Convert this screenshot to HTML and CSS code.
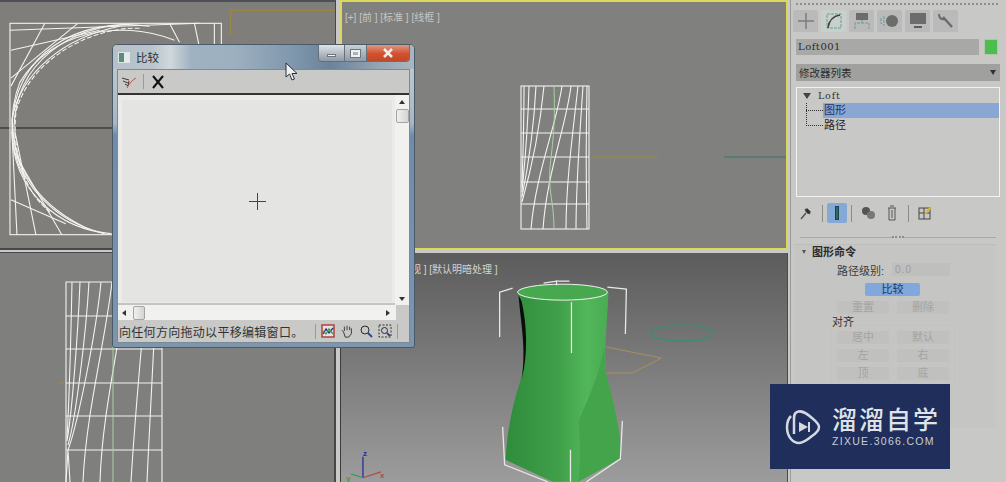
FILE: index.html
```html
<!DOCTYPE html>
<html lang="zh">
<head>
<meta charset="utf-8">
<title>Loft 比较</title>
<link rel="stylesheet" href="styles.css">
</head>
<body>
<main class="app">
  <section class="viewports">
    <div class="vp vp-top">
      <svg class="wire" viewBox="0 0 336 246">
        <line class="axis-black" x1="0" y1="126" x2="336" y2="126"/>
        <path class="orange" d="M231 33V8H336"/>
        <g class="w">
          <rect x="10" y="21" width="212" height="212"/>
          <line x1="215" y1="21" x2="215" y2="233"/>
          <line x1="10" y1="28" x2="200" y2="21"/>
          <line x1="45" y1="21" x2="11" y2="84"/>
          <line x1="78" y1="21" x2="11" y2="76"/>
          <line x1="11" y1="48" x2="100" y2="28"/>
          <line x1="195" y1="21" x2="200" y2="45"/>
          <line x1="170" y1="21" x2="180" y2="40"/>
          <line x1="11" y1="198" x2="66" y2="222"/>
          <line x1="15" y1="130" x2="36" y2="233"/>
          <line x1="14" y1="150" x2="62" y2="233"/>
          <line x1="12" y1="130" x2="17" y2="233"/>
          <path d="M150 24C80 14 12 50 12 128C12 190 60 228 112 232"/>
          <path d="M130 22C70 24 16 60 14 125C12 180 55 220 105 232"/>
          <path d="M120 24C65 35 20 70 12 118C14 170 40 205 90 228"/>
          <path d="M175 38C120 16 50 30 20 80C8 110 10 150 24 175"/>
          <path class="dash" d="M140 26C95 24 30 55 16 110C12 150 24 190 50 210"/>
        </g>
      </svg>
    </div>
    <div class="vp vp-front">
      <span class="vp-label">[+] [前 ] [标准 ] [线框 ]</span>
      <svg class="wire" viewBox="0 0 444 246">
        <line class="orange" x1="250" y1="155" x2="316" y2="155"/>
        <line class="teal" x1="382" y1="155" x2="444" y2="155"/>
        <g class="w">
          <rect x="179" y="84" width="68" height="143"/>
          <path d="M179 107H247M179 131H247M179 155H247M179 180H247M179 202H247"/>
          <path d="M245 84C244 130 244 180 245 227"/>
          <path d="M241 84C238 130 234 180 234 227"/>
          <path d="M236 84C231 130 224 180 224 227"/>
          <path d="M229 84C224 125 205 170 201 227"/>
          <path d="M220 84C214 125 194 170 189 227"/>
          <path d="M202 84C198 125 190 165 180 200"/>
          <path d="M194 84C192 125 186 165 180 195"/>
          <path d="M187 84C186 125 183 160 180 190"/>
          <path d="M182 84C182 125 181 150 180 185"/>
        </g>
        <path class="green-line" d="M212 84C213 120 212 130 208 165C206 190 212 200 212 227"/>
      </svg>
    </div>
    <div class="vp vp-left">
      <svg class="wire" viewBox="0 0 334 229">
        <g class="w">
          <path d="M66 229V29H162V229"/>
          <path d="M66 63H162M66 96H162M66 130H162M66 163H162M66 197H162"/>
          <path d="M157 29C154 90 150 160 147 229"/>
          <path d="M147 29C142 90 135 160 131 229"/>
          <path d="M127 29C120 90 102 160 100 229"/>
          <path d="M112 29C105 90 86 160 83 229"/>
          <path d="M101 29C96 80 78 170 68 197"/>
          <path d="M89 29C86 80 76 165 68 192"/>
          <path d="M80 29C78 80 72 160 67 188"/>
          <path d="M72 29C71 80 69 150 67 185"/>
          <path d="M68 197L66 229M68 197L70 229"/>
        </g>
        <path class="green-line" d="M113 29V229"/>
        <line class="orange" x1="58" y1="130" x2="64" y2="130"/>
      </svg>
    </div>
    <div class="vp vp-persp">
      <span class="vp-label persp-label">[+] [透视 ] [默认明暗处理 ]</span>
      <svg class="wire" viewBox="0 0 447 229">
        <defs>
          <linearGradient id="vase" x1="0" y1="0" x2="1" y2="0">
            <stop offset="0" stop-color="#2f8c3b"/>
            <stop offset=".45" stop-color="#3f9f49"/>
            <stop offset=".7" stop-color="#52b65a"/>
            <stop offset="1" stop-color="#46a64e"/>
          </linearGradient>
        </defs>
        <path class="orange-thin" d="M266 94L321 105 292 120 266 120"/>
        <ellipse class="teal-thin" cx="342" cy="80" rx="32" ry="8"/>
        <path class="vase" d="M178 39C180 70 186 95 181 124C172 150 166 180 165 207L212 229H238L281 205C280 175 272 145 266 122C263 100 267 70 268 39Z"/>
        <path class="vase-dark" d="M264 94C258 125 246 150 238 168C240 190 240 210 238 229L281 205C280 175 272 145 266 122C264 112 264 103 264 94Z"/>
        <path class="black" d="M178 42C180 70 186 95 181 127C188 100 186 70 181 48Z"/>
        <ellipse class="vase-top" cx="222" cy="39" rx="45" ry="8"/>
        <g class="bracket">
          <path d="M159 84V39L172 35"/>
          <path d="M203 30L216 28H229M216 27V32"/>
          <path d="M267 34L286 36 285 81"/>
          <path d="M231 49V100"/>
          <path d="M162 174L164 212 207 229"/>
          <path d="M230 197V229M282 168L280 206 246 229"/>
        </g>
        <g class="gizmo">
          <path class="gz" d="M22 225V204"/>
          <path class="rz" d="M22 225L40 219"/>
          <path class="gr" d="M22 225L10 221"/>
        </g>
        <text class="gz-t gz-z" x="22" y="203">z</text>
        <text class="gz-t gz-x" x="39" y="225">x</text>
        <text class="gz-t gz-y" x="5" y="228">y</text>
      </svg>
    </div>
  </section>

  <aside class="panel">
    <div class="dots"></div>
    <nav class="tabs">
      <div class="tab"><svg viewBox="0 0 24 22"><path class="ic" d="M12 3V19M4 11H20"/></svg></div>
      <div class="tab tab-on"><svg viewBox="0 0 24 22"><rect class="ic-t" x="5" y="4" width="14" height="14"/><path class="ic-d" d="M6 18C7 10 11 6 18 5"/></svg></div>
      <div class="tab"><svg viewBox="0 0 24 22"><rect class="ic-f" x="6" y="3" width="12" height="7"/><path class="ic-t" d="M12 10V13M5 19V13H19V19"/></svg></div>
      <div class="tab"><svg viewBox="0 0 24 22"><circle class="ic-f" cx="14" cy="11" r="6"/><path class="ic-t" d="M6 6V16M3 8V14"/></svg></div>
      <div class="tab"><svg viewBox="0 0 24 22"><rect class="ic-f" x="4" y="3" width="16" height="11"/><path class="ic-d" d="M8 17H16"/></svg></div>
      <div class="tab"><svg viewBox="0 0 24 22"><path class="ic-w" d="M9 7L18 17"/><path class="ic-w2" d="M5 4C5 8 7 10 11 9"/></svg></div>
    </nav>
    <div class="name-row">
      <div class="name-field">Loft001</div>
      <div class="swatch"></div>
    </div>
    <div class="mod-list"><span>修改器列表</span><i class="tri"></i></div>
    <div class="stack">
      <div class="stack-root"><i class="tri root-tri"></i>Loft</div>
      <div class="stack-row stack-sel"><i class="tree-h"></i><span>图形</span></div>
      <div class="stack-row"><i class="tree-h"></i><span>路径</span></div>
      <i class="tree-v"></i>
    </div>
    <div class="stack-tools">
      <svg class="tool tool-pin" viewBox="0 0 16 16"><path class="pin" d="M3 14L8 8M7 4L12 9"/><path class="pin-b" d="M9 3L13 7 10 9 7 6Z"/></svg>
      <i class="vsep"></i>
      <div class="tool-on"><i></i></div>
      <i class="vsep"></i>
      <svg class="tool" viewBox="0 0 16 16"><circle class="dk" cx="6" cy="6" r="4"/><circle class="dk2" cx="11" cy="10" r="4"/></svg>
      <svg class="tool" viewBox="0 0 16 16"><path class="trash" d="M6 1H10M4 3H12M5 3V15H11V3M8 5V13"/></svg>
      <i class="vsep"></i>
      <svg class="tool" viewBox="0 0 16 16"><rect class="cfg" x="2" y="3" width="11" height="11"/><path class="cfg" d="M2 8H13M7 3V14"/><path class="cfg-y" d="M8 9L14 2"/></svg>
    </div>
    <div class="divider"><span></span></div>
    <section class="rollout">
      <h2 class="roll-title"><i class="tri tri-small"></i>图形命令</h2>
      <div class="level"><span>路径级别:</span><span class="spin">0.0</span></div>
      <button class="btn-on" type="button">比较</button>
      <div class="btn-row"><span class="btn-off">重置</span><span class="btn-off">删除</span></div>
      <div class="align-label">对齐</div>
      <div class="align-box">
        <div class="btn-row"><span class="btn-off">居中</span><span class="btn-off">默认</span></div>
        <div class="btn-row"><span class="btn-off">左</span><span class="btn-off">右</span></div>
        <div class="btn-row"><span class="btn-off">顶</span><span class="btn-off">底</span></div>
      </div>
    </section>
  </aside>

  <div class="dialog">
    <header class="titlebar">
      <div class="app-icon"></div>
      <span class="title-text">比较</span>
      <div class="win-btns">
        <div class="wb wb-min"><i></i></div>
        <div class="wb wb-max"><i></i></div>
        <div class="wb wb-close">
          <svg viewBox="0 0 12 10"><path d="M2 1L10 9M10 1L2 9"/></svg>
        </div>
      </div>
    </header>
    <div class="client">
      <div class="dlg-toolbar">
        <svg class="dt-icon" viewBox="0 0 18 16"><path class="pick-b" d="M3 4L10 6M4 7L9 9M6 10L9 12 10 7"/><path class="pick-r" d="M8 14C10 10 13 6 17 4"/></svg>
        <i class="dt-sep"></i>
        <svg class="dt-x" viewBox="0 0 14 14"><path d="M2 1L12 13M12 1L2 13"/></svg>
      </div>
      <div class="dlg-body">
        <div class="canvas-wrap">
          <div class="canvas"><span class="cross"></span></div>
        </div>
        <div class="vbar">
          <i class="arrow-up"></i>
          <div class="thumb"></div>
          <i class="arrow-down"></i>
        </div>
      </div>
      <div class="hbar">
        <i class="arrow-left"></i>
        <div class="thumb thumb-h"></div>
        <i class="arrow-right"></i>
      </div>
      <footer class="status">
        <span class="status-text">向任何方向拖动以平移编辑窗口。</span>
        <i class="dt-sep"></i>
        <svg class="st-icon" viewBox="0 0 14 14"><rect class="st-frame" x="1" y="1" width="12" height="12"/><path class="st-blue" d="M2 10L5 5 8 9 12 4"/><path class="st-green" d="M2 7L5 10 8 5 12 10"/></svg>
        <svg class="st-icon" viewBox="0 0 16 16"><path class="st-line" d="M4 9L2 7M5 8V3M8 7V2M11 7V3M13 8V5M13 8V11L10 15H6L4 9"/></svg>
        <svg class="st-icon" viewBox="0 0 14 14"><circle class="st-line" cx="6" cy="6" r="4"/><path class="st-bl" d="M9 9L13 13"/></svg>
        <svg class="st-icon" viewBox="0 0 14 14"><rect class="st-dash" x="1" y="1" width="12" height="12"/><circle class="st-line" cx="6.5" cy="6.5" r="3"/><path class="st-bl" d="M9 9L12 12"/></svg>
        <i class="dt-sep"></i>
      </footer>
    </div>
  </div>

  <svg class="cursor" viewBox="0 0 13 19"><path d="M1 1V15L4.500 12 7 18 9.500 17 7 11.500H12Z"/></svg>

  <div class="logo">
    <svg class="logo-icon" viewBox="0 0 36 40">
      <path class="logo-s" d="M6 9C3 12 2 15 2 20C2 30 8 36 14 36C18 36 21 34 27 29C33 25 34 22 34 20C34 18 33 16 27 11C20 5 16 3 12 5C9 6 9 9 9 13V27"/>
      <path class="logo-f" d="M14 15L23 20 14 25Z"/>
      <rect class="logo-f" x="23" y="15" width="2" height="10"/>
    </svg>
    <div class="logo-text">
      <div class="logo-cn">溜溜自学</div>
      <div class="logo-en">ZIXUE.3066.COM</div>
    </div>
  </div>
</main>
</body>
</html>
```

FILE: styles.css
```css
* { box-sizing: border-box; }
html, body { margin: 0; padding: 0; }
body {
  width: 1006px;
  height: 482px;
  overflow: hidden;
  background: #c8c8c6;
  font-family: "Liberation Sans", "Noto Sans CJK SC", sans-serif;
  font-size: 12px;
  color: #222;
}
i { display: block; }

.app { position: relative; display: flex; width: 1006px; height: 482px; overflow: hidden; }

/* viewports */
.viewports {
  width: 790px;
  height: 482px;
  display: grid;
  grid-template-columns: 336px 454px;
  grid-template-rows: 250px 232px;
  background: #c9c9c7;
}
.vp { position: relative; overflow: hidden; }
.wire { position: absolute; left: 0; top: 0; width: 100%; height: 100%; }
.vp-top { background: #7f7e7a; border-top: 2px solid #4d5054; border-bottom: 2px solid #45474a; border-right: 1px solid #45474a; }
.vp-front { margin: 0 2px 0 4px; background: #80807e; border: 2px solid #dcd85a; }
.vp-left { background: #7f7f7d; border-top: 1px solid #4a4a4a; margin-top: 2px; height: 230px; border-right: 2px solid #45474a; width: 336px; }
.vp-persp {
  margin: 3px 2px 0 4px;
  background: linear-gradient(#5c5c5c, #9c9c9c);
  border-left: 1px solid #3c3c3c;
  border-right: 1px solid #4a4a4a;
}
.vp-label { position: absolute; left: 3px; top: 7px; font-size: 10px; color: #c6c6c6; white-space: pre; }
.persp-label { left: 43px; top: 8px; color: #d4d4d4; }

.w { fill: none; stroke: #f3f3f1; stroke-width: 1.100; }
.dash { stroke-dasharray: 5 2; }
.axis-black { stroke: #1c1c1c; stroke-width: 1; }
.orange { fill: none; stroke: #a08a3c; stroke-width: 1; }
.teal { stroke: #4c7c74; stroke-width: 1.500; }
.green-line { fill: none; stroke: #a8d4a0; stroke-width: 1; }
.orange-thin { fill: none; stroke: #a8905a; stroke-width: 1; }
.teal-thin { fill: none; stroke: #3f8a78; stroke-width: 1.500; }
.black { fill: #0c0c0c; }
.vase { fill: url(#vase); }
.vase-dark { fill: #43a44c; }
.vase-top { fill: #48a850; stroke: #eef3ee; stroke-width: 1; }
.bracket { fill: none; stroke: #e8e8e6; stroke-width: 1.300; }
.gizmo path { fill: none; stroke-width: 1.300; }
.gz { stroke: #2a2a9c; }
.rz { stroke: #b04a4a; }
.gr { stroke: #3c9c4c; }
.gz-t { font-size: 8px; font-weight: 700; font-family: "Liberation Sans", sans-serif; }
.gz-z { fill: #2a2a9c; }
.gz-x { fill: #b04a4a; }
.gz-y { fill: #3c9c4c; }

/* command panel */
.panel {
  width: 216px;
  height: 482px;
  padding: 3px 6px 0 5px;
  background: #c8c8c6;
  border-left: 1px solid #9a9a98;
  display: flex;
  flex-direction: column;
}
.dots { height: 3px; margin-right: 2px; border-top: 2px dotted #8e8e8c; }
.tabs { display: flex; gap: 3px; margin: 4px 0 0 -3px; height: 22px; }
.tab { width: 25px; height: 22px; background: #bababa; border-radius: 2px 2px 0 0; }
.tab svg { display: block; width: 24px; height: 22px; margin: 0 auto; }
.tab-on { background: #c8d0cc; }
.ic { stroke: #7c7c7a; stroke-width: 1.500; fill: none; }
.ic-t { fill: none; stroke: #6c9c94; stroke-width: 1; stroke-dasharray: 3 1; }
.ic-d { fill: none; stroke: #3c3c3c; stroke-width: 1.500; }
.ic-f { fill: #6c6c6a; }
.ic-w { stroke: #6c6c6a; stroke-width: 2.500; fill: none; }
.ic-w2 { stroke: #6c6c6a; stroke-width: 2; fill: none; }
.name-row { display: flex; justify-content: space-between; margin-top: 7px; height: 16px; padding-right: 2px; }
.name-field {
  width: 183px;
  background: #a8a8a6;
  padding-left: 2px;
  font: 10px/16px "DejaVu Serif", serif;
  letter-spacing: .5px;
  color: #2c2c2c;
}
.swatch { width: 14px; background: #4dbd4d; border: 1px solid #b4c4b4; }
.mod-list {
  display: flex;
  justify-content: space-between;
  align-items: center;
  height: 17px;
  margin-top: 9px;
  padding: 0 4px 0 3px;
  background: #a0a09e;
  font-size: 10.500px;
  color: #2c2c2c;
}
.tri { width: 0; height: 0; border: 3px solid transparent; border-top: 5px solid #333; border-bottom: 0; }
.stack {
  position: relative;
  height: 110px;
  margin-top: 6px;
  border: 1px solid #f2f2f0;
  background: #c8c8c6;
  font-size: 11px;
}
.stack-root {
  display: flex;
  align-items: center;
  height: 15px;
  padding: 0 0 0 6px;
  font: 400 9.500px/15px "DejaVu Serif", serif;
  letter-spacing: .8px;
  color: #333;
}
.root-tri { margin-right: 7px; border-width: 4px; border-top-width: 6px; border-top-color: #444; border-bottom: 0; }
.stack-row { display: flex; align-items: center; height: 15px; margin-left: 9px; }
.stack-row span { flex: 1; height: 15px; padding-left: 1px; line-height: 15px; }
.stack-sel span { background: #8aa6d2; color: #1d3464; }
.tree-h { width: 17px; border-top: 1px dotted #333; }
.tree-v { position: absolute; left: 9px; top: 15px; height: 23px; border-left: 1px dotted #333; }
.stack-tools { display: flex; align-items: center; gap: 8px; height: 20px; margin-top: 6px; padding-left: 2px; }
.tool { width: 16px; height: 16px; flex: none; }
.vsep { width: 1px; height: 17px; background: #8c8c8a; }
.tool-on { width: 20px; height: 20px; background: #86a8d6; border-radius: 2px; display: flex; justify-content: center; align-items: center; margin: 0 -4px; }
.tool-on i { width: 4px; height: 14px; background: #2a6c6c; border: 1px solid #204444; }
.pin { stroke: #555; stroke-width: 1.500; }
.pin-b { fill: #333; }
.dk { fill: #555; }
.dk2 { fill: #777; }
.trash { fill: none; stroke: #555; stroke-width: 1; }
.cfg { fill: none; stroke: #444; stroke-width: 1; }
.cfg-y { stroke: #d8b83c; stroke-width: 2; }
.divider { display: flex; justify-content: center; margin: 14px 4px 0; border-top: 1px solid #a8a8a6; height: 7px; }
.divider span { width: 12px; height: 3px; border-top: 2px dotted #8e8e8c; margin-top: -2px; background: #c8c8c6; }
.rollout {
  margin: 0 4px 0 -2px;
  height: 184px;
  padding: 0 0 0 5px;
  background: #c5c5c3;
  border-top: 1px solid #bdbdbb;
}
.roll-title { display: flex; align-items: center; gap: 6px; margin: 0 0 0 3px; font-size: 11px; line-height: 14px; font-weight: 700; color: #2c2c2c; }
.tri-small { border-width: 2px; border-top-width: 4px; border-top-color: #555; }
.level { display: flex; align-items: center; gap: 8px; margin: 3px 0 0 38px; height: 15px; font-size: 11px; color: #3c3c3c; }
.spin { width: 58px; height: 13px; font-size: 10px; line-height: 13px; padding-left: 3px; color: #9c9c9a; background: #bfbfbd; letter-spacing: 1px; }
.btn-on {
  display: block;
  width: 55px;
  height: 13px;
  margin: 6px 0 0 66px;
  padding: 0;
  border: 0;
  border-radius: 2px;
  background: #80a8dc;
  color: #1d3a66;
  font: 11px/13px "Liberation Sans", "Noto Sans CJK SC", sans-serif;
}
.btn-row { display: flex; gap: 8px; margin: 5px 0 0 38px; }
.btn-off { width: 52px; height: 13px; line-height: 13px; text-align: center; font-size: 11px; color: #a4a4a2; background: #c0c0be; }
.align-label { margin: 1px 0 0 33px; line-height: 14px; font-size: 11px; color: #333; }
.align-box { width: 124px; height: 62px; margin: -4px 0 0 32px; border: 1px solid #c2c2c0; }
.align-box .btn-row { margin: 5px 0 0 5px; }

/* floating dialog */
.dialog {
  position: absolute;
  left: 112px;
  top: 44px;
  width: 303px;
  height: 304px;
  padding: 0 4px 4px;
  border: 1px solid #4a5a68;
  border-radius: 5px 5px 3px 3px;
  background: linear-gradient(#c7ced4, #a9b6c0 26%, #6f8ca8 30%, #7d96ae 100%);
  display: flex;
  flex-direction: column;
}
.titlebar {
  display: flex;
  align-items: center;
  height: 24px;
  margin: 0 -4px;
  padding-left: 5px;
  flex: none;
  border-radius: 4px 4px 0 0;
  background: linear-gradient(90deg, #b6c0c8 0, #bac4cc 13%, #d0d8dc 19%, #9fb2c2 26%, #9db0c0 40%, #7c94aa 62%, #6b8298 72%, #93a5b4 88%, #a9b6c0 100%);
}
.app-icon { width: 12px; height: 11px; background: linear-gradient(90deg, #5c8a80 50%, #e4eae8 50%); border: 1px solid #dfe6e8; }
.title-text { margin-left: 6px; font-size: 11.500px; color: #2a3238; }
.win-btns { display: flex; align-self: flex-start; margin-left: auto; margin-right: 4px; height: 17px; border: 1px solid #64717c; border-top: 0; border-radius: 0 0 4px 4px; overflow: hidden; }
.wb { display: flex; align-items: center; justify-content: center; height: 16px; }
.wb-min { width: 26px; background: linear-gradient(#dfe3e6, #8f9aa4); border-right: 1px solid #64717c; }
.wb-min i { width: 9px; height: 3px; margin-top: 4px; background: #f2f4f5; border: 1px solid #6c7680; }
.wb-max { width: 22px; background: linear-gradient(#c9d0d6, #8f9aa4); border-right: 1px solid #64717c; }
.wb-max i { width: 9px; height: 7px; border: 2px solid #eef1f3; outline: 1px solid #6c7680; }
.wb-close { width: 42px; background: linear-gradient(#d89a86, #d6502c 55%, #bc4a2c); }
.wb-close svg { width: 12px; height: 10px; }
.wb-close path { fill: none; stroke: #f4ece8; stroke-width: 2.500; }
.client {
  flex: 1;
  min-height: 0;
  display: flex;
  flex-direction: column;
  background: #c8c8c6;
  border: 1px solid #7c8a96;
}
.dlg-toolbar { display: flex; align-items: center; height: 25px; flex: none; padding-left: 1px; background: #c9c9c7; border-bottom: 2px solid #333; }
.dt-icon { width: 18px; height: 16px; }
.pick-b { fill: none; stroke: #3c3c3c; stroke-width: 1; }
.pick-r { fill: none; stroke: #d04c4c; stroke-width: 1; }
.dt-sep { width: 1px; height: 15px; background: #9a9a98; flex: none; }
.dlg-toolbar .dt-sep { margin-left: 6px; }
.dt-x { width: 14px; height: 14px; margin-left: 7px; }
.dt-x path { fill: none; stroke: #111; stroke-width: 2; }
.dlg-body { display: flex; flex: 1; min-height: 0; }
.canvas-wrap { flex: 1; padding: 5px 3px 1px 4px; background: #ebebe9; border-bottom: 2px solid #c4c4c2; }
.canvas { position: relative; height: 100%; background: #e4e4e2; }
.cross { position: absolute; left: 127px; top: 93px; width: 17px; height: 17px; background: linear-gradient(#444, #444) center/1px 100% no-repeat, linear-gradient(#444, #444) center/100% 1px no-repeat; }
.vbar { width: 14px; display: flex; flex-direction: column; align-items: center; padding: 5px 0 4px; background: #f1f1ef; }
.thumb { width: 13px; height: 14px; margin-top: 5px; background: linear-gradient(90deg, #f0f0ee, #d4d4d2); border: 1px solid #a4a4a4; border-radius: 2px; }
.arrow-up { border: 3px solid transparent; border-bottom: 4px solid #333; border-top: 0; }
.arrow-down { margin-top: auto; border: 3px solid transparent; border-top: 4px solid #333; border-bottom: 0; }
.hbar { display: flex; align-items: center; height: 15px; flex: none; padding: 0 6px 0 4px; background: #f1f1ef; border-right: 13px solid #c9c9c7; }
.thumb-h { width: 12px; margin: 0 0 0 7px; }
.arrow-left { border: 3px solid transparent; border-right: 4px solid #333; border-left: 0; }
.arrow-right { margin-left: auto; border: 3px solid transparent; border-left: 4px solid #333; border-right: 0; }
.status { display: flex; align-items: center; gap: 5px; height: 22px; flex: none; padding-left: 1px; background: #c9c9c7; }
.status-text { width: 191px; font-size: 12px; letter-spacing: .3px; color: #333; white-space: nowrap; }
.st-icon { width: 14px; height: 14px; flex: none; }
.st-frame { fill: #e8e4dc; stroke: #b04040; stroke-width: 1.500; }
.st-blue { fill: none; stroke: #2a2a9c; stroke-width: 1.300; }
.st-green { fill: none; stroke: #3c9c4c; stroke-width: 1.300; }
.st-line { fill: none; stroke: #2c2c2c; stroke-width: 1; }
.st-bl { fill: none; stroke: #2a4488; stroke-width: 1.800; }
.st-dash { fill: none; stroke: #333; stroke-width: 1; stroke-dasharray: 2 1.500; }

.cursor { position: absolute; left: 285px; top: 62px; width: 13px; height: 19px; }
.cursor path { fill: #eef0f2; stroke: #2c3034; stroke-width: 1; }

/* watermark */
.logo {
  position: absolute;
  left: 770px;
  top: 384px;
  width: 180px;
  height: 85px;
  display: flex;
  align-items: center;
  padding: 0 0 0 15px;
  background: #1f2e5a;
}
.logo-icon { width: 36px; height: 40px; flex: none; }
.logo-s { fill: none; stroke: #d4d8e0; stroke-width: 2.500; }
.logo-f { fill: #d4d8e0; }
.logo-text { margin-left: 11px; color: #dfe2e8; }
.logo-cn { font-size: 25px; line-height: 30px; letter-spacing: 2px; white-space: nowrap; font-weight: 500; }
.logo-en { font-size: 10.500px; line-height: 13px; letter-spacing: 1.300px; white-space: nowrap; color: #c9cdd6; }
```
